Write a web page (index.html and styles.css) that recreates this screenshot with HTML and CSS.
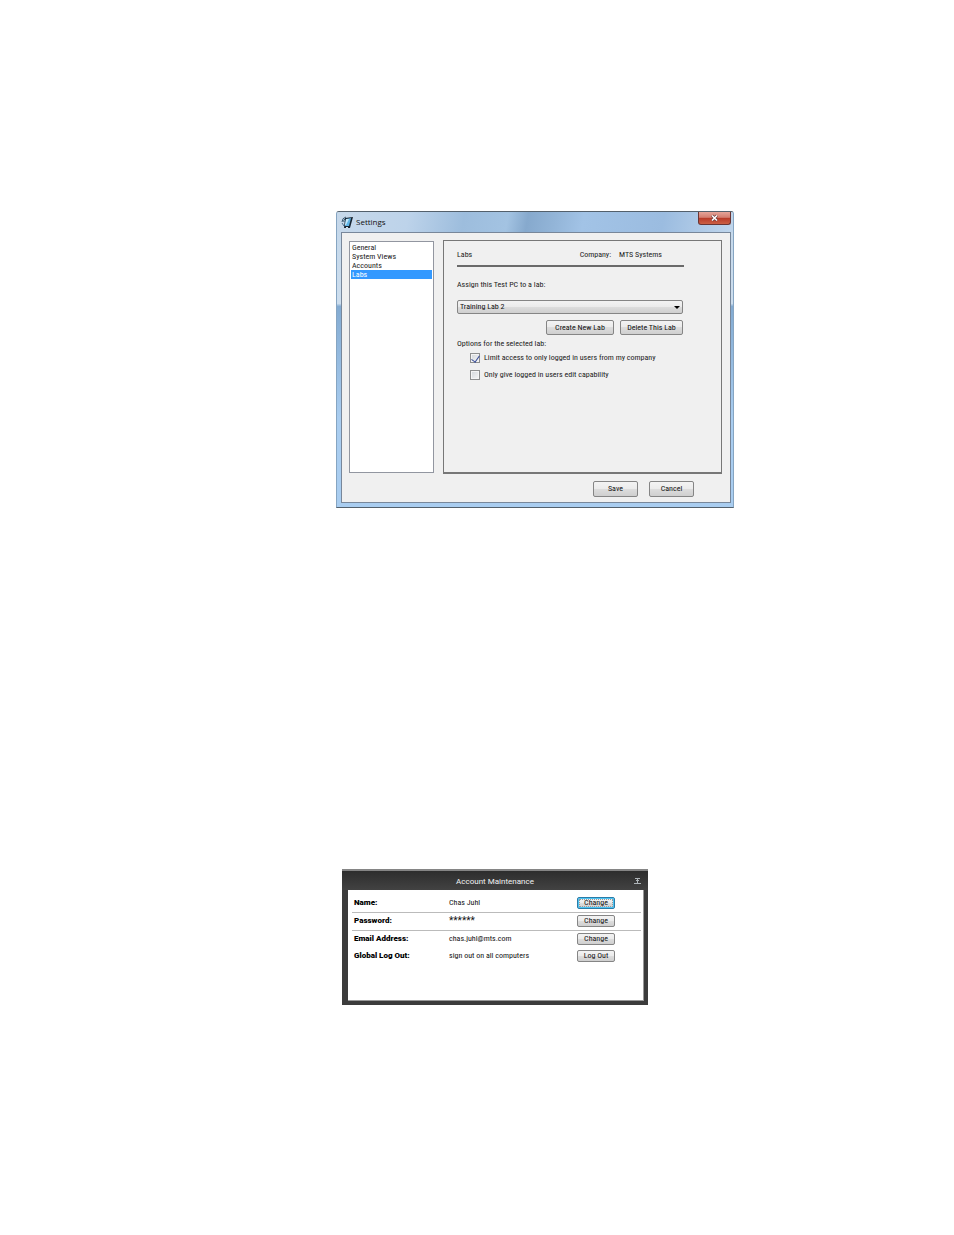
FILE: index.html
```html
<!DOCTYPE html>
<html lang="en">
<head>
    <meta charset="UTF-8">
    <meta name="viewport" content="width=device-width, initial-scale=1.0">
    <title>Settings</title>
    <link rel="stylesheet" href="styles.css">
</head>
<body>
    <section class="window">
        <header class="title-bar">
            <svg class="app-icon" viewBox="0 0 12 13" aria-hidden="true">
                <path d="M4 2 12 1 9 12 3 12z" fill="#182431"/>
                <path d="M5 3 10 2 8 10 4 10z" fill="#5fb4e6"/>
                <path d="M5 3 8 3 5 9 4 9z" fill="#c4e8fa"/>
                <path d="M5 11h2v1H5z" fill="#dfe6ec"/>
                <path d="M1 6Q1 2 5 1M3 6Q2 4 4 3" fill="none" stroke="#37566e"/>
                <path d="M1 7 3 10" stroke="#4a6f8c"/>
            </svg>
            <h1 class="title">Settings</h1>
            <button type="button" class="close" aria-label="Close">
                <svg viewBox="0 0 9 8" aria-hidden="true">
                    <path d="M2 1.500 7 6.500M7 1.500 2 6.500" stroke="#6b3a3a" stroke-width="3"/>
                    <path d="M2 1.500 7 6.500M7 1.500 2 6.500" stroke="#fff" stroke-width="1.600"/>
                </svg>
            </button>
        </header>

        <form class="client">
            <div class="columns">
                <ul class="categories">
                    <li>General</li>
                    <li>System Views</li>
                    <li>Accounts</li>
                    <li class="selected">Labs</li>
                </ul>

                <div class="panel">
                    <div class="panel-head">
                        <span>Labs</span>
                        <span class="company"><span>Company:</span><span>MTS Systems</span></span>
                    </div>
                    <label class="lab-label" for="lab">Assign this Test PC to a lab:</label>
                    <div class="lab-select">
                        <select id="lab">
                            <option>Training Lab 2</option>
                        </select>
                    </div>
                    <div class="lab-actions">
                        <button type="button" class="create">Create New Lab</button>
                        <button type="button" class="delete">Delete This Lab</button>
                    </div>
                    <p class="options-title">Options for the selected lab:</p>
                    <div class="option">
                        <input type="checkbox" id="limit" checked>
                        <label for="limit">Limit access to only logged in users from my company</label>
                    </div>
                    <div class="option">
                        <input type="checkbox" id="edit">
                        <label for="edit">Only give logged in users edit capability</label>
                    </div>
                </div>
            </div>

            <div class="dialog-actions">
                <button type="button">Save</button>
                <button type="button">Cancel</button>
            </div>
        </form>
    </section>

    <section class="account">
        <header class="account-head">
            <h2>Account Maintenance</h2>
            <button type="button" class="collapse" aria-label="Collapse">
                <svg viewBox="0 0 7 6" aria-hidden="true">
                    <path d="M1 .5h5M0 5.500h7M3.500 1v4M2 2.500h3" stroke="#aeb4b8" fill="none"/>
                </svg>
            </button>
        </header>
        <div class="account-body">
            <table>
                <tr class="ruled">
                    <th scope="row">Name:</th>
                    <td>Chas Juhl</td>
                    <td><button type="button" class="focused">Change</button></td>
                </tr>
                <tr class="ruled">
                    <th scope="row">Password:</th>
                    <td class="password">******</td>
                    <td><button type="button">Change</button></td>
                </tr>
                <tr>
                    <th scope="row">Email Address:</th>
                    <td>chas.juhl@mts.com</td>
                    <td><button type="button">Change</button></td>
                </tr>
                <tr>
                    <th scope="row">Global Log Out:</th>
                    <td>sign out on all computers</td>
                    <td><button type="button">Log Out</button></td>
                </tr>
            </table>
        </div>
    </section>
</body>
</html>
```

FILE: styles.css
```css
* {
    box-sizing: border-box;
}

body {
    margin: 0;
    padding: 211px 220px 0 336px;
    background: #fff;
    color: #222;
    font: 8px/10px "Roboto Condensed", Lato, sans-serif;
}

h1, h2, p, ul {
    margin: 0;
    padding: 0;
    font-size: 8px;
    font-weight: normal;
}

button, select {
    margin: 0;
    padding: 0;
    color: #111;
    font: inherit;
    white-space: nowrap;
    border: 1px solid #858585;
    border-radius: 2px;
    background: linear-gradient(#f3f3f3, #ebebeb 50%, #dddddd 50%, #cfcfcf);
}

/* Settings window */
.window {
    min-width: 360px;
    padding: 0 2px 4px 4px;
    border: 1px solid #53606c;
    border-right-color: #86a5c2;
    border-left-color: #86a5c2;
    border-radius: 3px 3px 0 0;
    background: linear-gradient(#c3d7ea, #cddeee 31%, #83abd2 32%, #a9cdf0 70%, #a9cdf0);
}

.title-bar {
    display: flex;
    align-items: center;
    height: 20px;
    margin: 0 -2px 0 -4px;
    padding: 0 2px 0 4px;
    border-radius: 2px 2px 0 0;
    background: linear-gradient(100deg, #c6d8ea, #bdd3ea 18%, #9dbddd 32%, #a3c3e2 43%, #86a9cd 48%, #93b5d8 55%, #a2c3e6 62%, #9bbce0 82%, #c0d6ec);
}

.app-icon {
    width: 12px;
    height: 13px;
}

.title {
    flex: 1;
    margin-left: 3px;
    color: #111;
    font: 8px/12px "Open Sans", "Noto Sans", sans-serif;
}

.close {
    display: flex;
    align-self: flex-start;
    align-items: center;
    justify-content: center;
    width: 33px;
    height: 13px;
    border-color: #6b3533;
    border-top: 0;
    border-radius: 0 0 3px 3px;
    background: linear-gradient(#e5a599, #d47e70 45%, #b83a28 50%, #cc6044);
}

.close svg {
    width: 9px;
    height: 8px;
}

.client {
    padding: 7px 8px 5px 7px;
    border: 1px solid #78879a;
    background: #f0f0f0;
}

.columns {
    display: flex;
    gap: 9px;
}

.categories {
    flex: none;
    width: 85px;
    margin: 1px 0;
    padding: 1px 1px 0;
    border: 1px solid #9296a0;
    background: #fff;
    line-height: 9px;
    list-style: none;
}

.categories li {
    padding-left: 1px;
}

.categories .selected {
    background: #3399ff;
    color: #fff;
}

.panel {
    flex: 1;
    min-width: 0;
    min-height: 234px;
    padding: 9px 37px 0 13px;
    border: 1px solid #777;
    border-bottom-width: 2px;
}

.panel-head {
    display: flex;
    justify-content: space-between;
    height: 17px;
    border-bottom: 2px solid #6a6a6a;
}

.company {
    display: flex;
    gap: 8px;
    padding-right: 22px;
}

.lab-label {
    display: block;
    margin-top: 13px;
}

.lab-select {
    position: relative;
    margin: 10px 1px 6px 0;
}

.lab-select select {
    display: block;
    width: 100%;
    height: 14px;
    padding-left: 2px;
    appearance: none;
}

/* drop-down arrow laid over the select */
.lab-select::after {
    content: "";
    position: absolute;
    top: 6px;
    right: 3px;
    border: 3px solid transparent;
    border-top-color: #000;
    border-bottom: 0;
    pointer-events: none;
}

.lab-actions {
    display: flex;
    justify-content: flex-end;
    gap: 6px;
    padding-right: 1px;
}

.lab-actions button {
    height: 15px;
}

.create {
    width: 68px;
}

.delete {
    width: 63px;
}

.options-title {
    margin: 4px 0;
}

.option {
    display: flex;
    align-items: center;
    gap: 4px;
    height: 10px;
    margin: 0 0 7px 13px;
    white-space: nowrap;
}

.option input {
    width: 10px;
    height: 10px;
    margin: 0;
    border: 1px solid #8e8f8f;
    background: linear-gradient(135deg, #d2d6da, #f6f6f6);
    box-shadow: inset 0 0 0 1px #f4f4f4;
    appearance: none;
}

.option input:checked::before {
    content: "";
    display: block;
    width: 4px;
    height: 7px;
    margin: 0 0 0 2px;
    border: solid #3b4f99;
    border-width: 0 1px 1px 0;
    transform: rotate(35deg);
}

.dialog-actions {
    display: flex;
    justify-content: flex-end;
    gap: 11px;
    padding: 7px 28px 0 0;
}

.dialog-actions button {
    width: 45px;
    height: 16px;
}

/* Account maintenance */
.account {
    margin: 361px 86px 0 6px;
    padding: 0 4px 4px 6px;
    border-top: 2px solid #858585;
    background: #3c3c3c;
}

.account-head {
    display: flex;
    align-items: center;
    height: 19px;
    margin: 0 -4px 0 -6px;
    padding: 0 7px;
    background: linear-gradient(#2d2d2d, #424242);
    color: #f2f2f2;
}

.account-head h2 {
    flex: 1;
    padding: 2px 0 0 7px;
    font: 8px/10px Roboto, sans-serif;
    text-align: center;
}

.collapse {
    display: flex;
    border: 0;
    background: none;
}

.collapse svg {
    width: 7px;
    height: 6px;
}

.account-body {
    min-height: 111px;
    padding: 4px 2px 0 4px;
    border-right: 1px solid #999;
    border-bottom: 1px solid #999;
    background: #fff;
    color: #111;
}

table {
    width: 100%;
    border-collapse: collapse;
    table-layout: fixed;
}

tr {
    height: 17px;
}

.ruled {
    height: 18px;
    border-bottom: 1px solid #bbb;
}

th, td {
    padding: 0;
    text-align: left;
    vertical-align: middle;
    white-space: nowrap;
}

th {
    width: 97px;
    padding-left: 2px;
    color: #000;
    font: 900 8px/10px Roboto, sans-serif;
}

td:last-child {
    width: 64px;
}

td button {
    display: block;
    width: 38px;
    height: 12px;
    line-height: 10px;
}

.password {
    font: 10px/10px Roboto, sans-serif;
}

.focused {
    border-color: #2a7ca8;
    outline: 1px dotted #999;
    outline-offset: -3px;
    box-shadow: inset 0 0 0 1px #4cc4f4;
}
```
